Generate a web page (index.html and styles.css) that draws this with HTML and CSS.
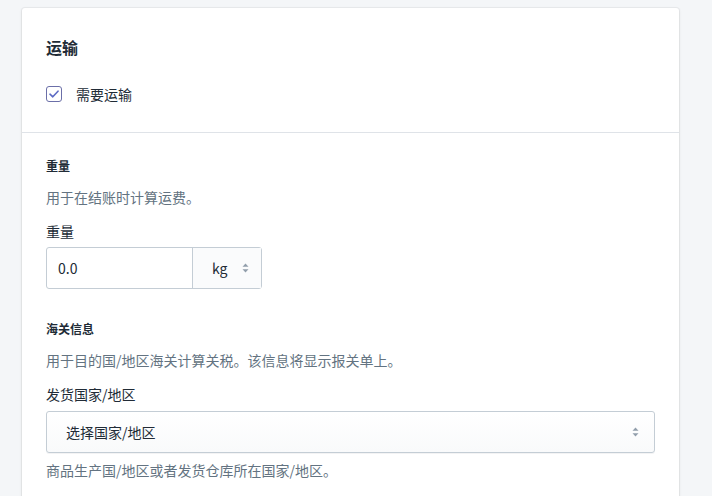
FILE: index.html
```html
<!DOCTYPE html>
<html lang="zh">
<head>
  <meta charset="UTF-8" />
  <meta name="viewport" content="width=device-width, initial-scale=1" />
  <title>运输</title>
  <link rel="stylesheet" href="styles.css">
</head>
<body>
  <div class="card">
    <section class="card-section">
      <h2 class="card-title">运输</h2>
      <label class="check">
        <span class="check-box">
          <svg width="10" height="8" viewBox="0 0 10 8"><path d="M1 4.2 L3.8 6.8 L9 1.2" fill="none" stroke="#5c6ac4" stroke-width="1.6" stroke-linecap="round" stroke-linejoin="round"/></svg>
        </span>
        <span>需要运输</span>
      </label>
    </section>

    <section class="card-section">
      <h3 class="sub-title">重量</h3>
      <p class="help">用于在结账时计算运费。</p>
      <div class="field-label">重量</div>
      <div class="weight">
        <div class="weight-input">0.0</div>
        <div class="weight-unit">
          <span>kg</span>
          <svg class="arrows" width="7" height="10" viewBox="0 0 7 10"><path d="M3.5 0.5 L6.5 3.8 H0.5 Z M3.5 9.5 L6.5 6.2 H0.5 Z" fill="#919eab"/></svg>
        </div>
      </div>

      <h3 class="sub-title customs">海关信息</h3>
      <p class="help">用于目的国/地区海关计算关税。该信息将显示报关单上。</p>
      <div class="field-label">发货国家/地区</div>
      <div class="select">
        <span>选择国家/地区</span>
        <svg class="arrows" width="7" height="10" viewBox="0 0 7 10"><path d="M3.5 0.5 L6.5 3.8 H0.5 Z M3.5 9.5 L6.5 6.2 H0.5 Z" fill="#919eab"/></svg>
      </div>
      <p class="help after">商品生产国/地区或者发货仓库所在国家/地区。</p>
    </section>
  </div>
</body>
</html>
```

FILE: styles.css
```css
body { margin: 0; background: #f4f6f8; font-family: "Microsoft YaHei", "Noto Sans CJK SC", "Noto Sans", sans-serif; color: #212b36; font-size: 14px; }
.card { margin: 8px 0 0 22px; width: 657px; background: #fff; border-radius: 3px; box-shadow: 0 0 0 1px rgba(63,63,68,0.05), 0 1px 3px 0 rgba(63,63,68,0.15); }
.card-section { padding: 20px 24px 28px 24px; }
.card-section + .card-section { border-top: 1px solid #dfe3e8; padding-top: 24px; }
.card-title { margin: 7px 0 0; font-size: 16px; font-weight: 600; line-height: 24px; }
.check { display: flex; align-items: center; gap: 14px; margin-top: 25px; line-height: 20px; }
.check-box { width: 14px; height: 14px; border: 1px solid #6b6fa8; border-radius: 3px; display: flex; align-items: center; justify-content: center; }
.sub-title { margin: 0; font-size: 12px; font-weight: 600; line-height: 18px; }
.help { margin: 12px 0 0; color: #637381; line-height: 20px; }
.field-label { margin-top: 14px; line-height: 20px; }
.weight { display: flex; margin-top: 6px; width: 214px; height: 40px; border: 1px solid #c4cdd5; border-radius: 3px; }
.weight-input { flex: 1; padding: 0 11px; line-height: 40px; border-right: 1px solid #c4cdd5; }
.weight-unit { width: 68px; display: flex; align-items: center; padding-left: 19px; gap: 15px; background: #fafbfc; box-sizing: border-box; }
.customs { margin-top: 31px; }
.select { display: flex; align-items: center; justify-content: space-between; margin-top: 7px; height: 40px; border: 1px solid #c4cdd5; border-radius: 3px; padding: 0 15px 0 19px; background: linear-gradient(#fff, #f9fafb); box-shadow: 0 1px 0 rgba(22,29,37,0.05); }
.help.after { margin-top: 7px; }
```
